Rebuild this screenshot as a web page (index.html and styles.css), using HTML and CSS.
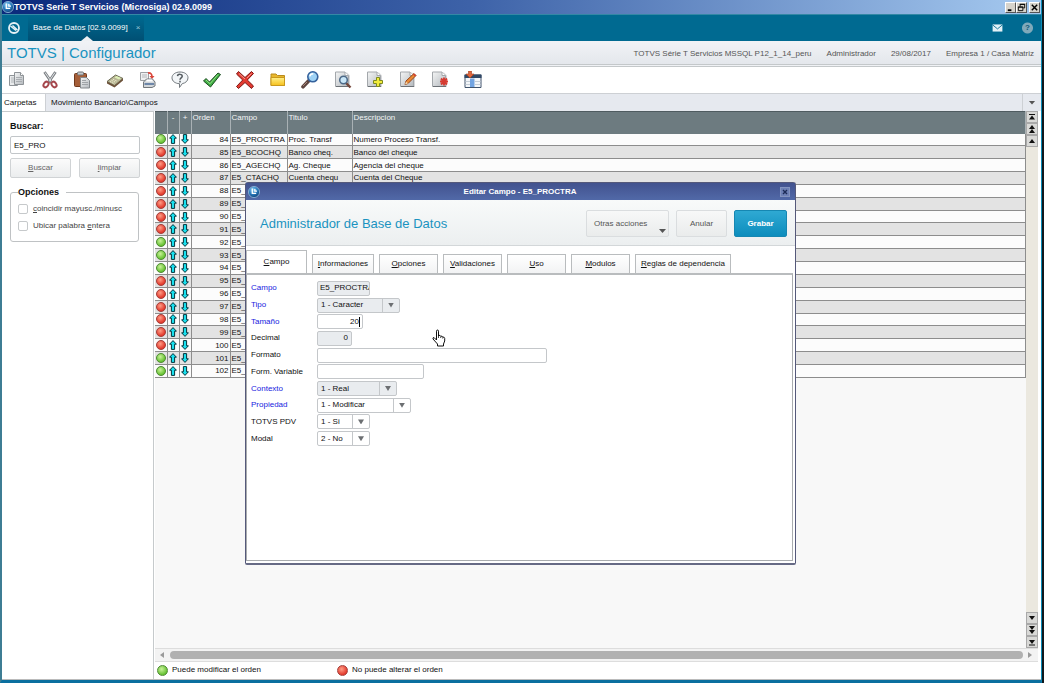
FILE: index.html
```html
<!DOCTYPE html>
<html lang="es">
<head>
    <meta charset="UTF-8">
    <meta name="viewport" content="width=device-width, initial-scale=1.0">
    <title>TOTVS Serie T Servicios (Microsiga) 02.9.0099</title>
    <link rel="stylesheet" href="styles.css">
</head>
<body>

<!-- Shared icons -->
<svg class="defs" aria-hidden="true">
    <defs>
        <radialGradient id="globe" cx="40%" cy="30%" r="75%">
            <stop offset="0" stop-color="#8fd0f5"/>
            <stop offset=".5" stop-color="#2b7fc0"/>
            <stop offset="1" stop-color="#0b3a70"/>
        </radialGradient>
        <linearGradient id="paper" x1="0" y1="0" x2="1" y2="1">
            <stop offset="0" stop-color="#f4f5f5"/>
            <stop offset="1" stop-color="#b4b9be"/>
        </linearGradient>
        <linearGradient id="yellow" x1="0" y1="0" x2="0" y2="1">
            <stop offset="0" stop-color="#fff08a"/>
            <stop offset="1" stop-color="#f6c01c"/>
        </linearGradient>
    </defs>
    <symbol id="logo" viewBox="0 0 14 14">
        <circle cx="7" cy="7" r="6.5" fill="url(#globe)" stroke="#8fb4d8"/>
        <path d="M5 3v5.5h4.500M8 3.500v2.500h2.500" fill="none" stroke="#fff" stroke-width="1.500"/>
    </symbol>
    <symbol id="page" viewBox="0 0 18 18">
        <path d="M2 1.500h11l3 3V16H2z" fill="#8b9095" opacity=".35"/>
        <path d="M1.500 1h9.500l3.500 3.500V15.500h-13z" fill="url(#paper)" stroke="#a3a7ab"/>
        <path d="M11 1v3.500h3.500" fill="#fff" stroke="#a3a7ab"/>
        <path d="M2 15.500h13" stroke="#6b7075"/>
    </symbol>
    <symbol id="up" viewBox="0 0 8 10">
        <path d="M4 .6L7.400 4.200H5.600V9.400H2.400V4.200H.6z" fill="#19e0ee" stroke="#04343c"/>
    </symbol>
    <symbol id="down" viewBox="0 0 8 10">
        <path d="M4 9.400L7.400 5.800H5.600V.6H2.400V5.800H.6z" fill="#19e0ee" stroke="#04343c"/>
    </symbol>
</svg>

<div class="app">

    <!-- Window title -->
    <header class="titlebar">
        <svg class="logo"><use href="#logo"/></svg>
        <span class="title">TOTVS Serie T Servicios (Microsiga) 02.9.0099</span>
        <button class="win-btn" aria-label="Minimizar"><svg viewBox="0 0 10 10"><path d="M2 8h4" stroke="#000" stroke-width="2"/></svg></button>
        <button class="win-btn" aria-label="Restaurar"><svg viewBox="0 0 10 10"><path d="M3.500 4V1.500h5v4H7M1.500 4.500h5v4h-5zM3 1.500h6M1 4.500h6" fill="none" stroke="#000"/></svg></button>
        <button class="win-btn win-close" aria-label="Cerrar"><svg viewBox="0 0 10 10"><path d="M2 2l6 6M8 2L2 8" stroke="#000" stroke-width="1.600"/></svg></button>
    </header>

    <!-- Program tabs -->
    <nav class="topbar">
        <a class="home" href="#" aria-label="Inicio">
            <svg viewBox="0 0 14 14"><circle cx="7" cy="7" r="5" fill="none" stroke="#e6f2f6" stroke-width="1.800"/><path d="M3.500 5L9 9.500M5.500 4.500L10.500 9" stroke="#e6f2f6" stroke-width="1.500"/></svg>
        </a>
        <div class="program-tab">
            <a href="#">Base de Datos [02.9.0099]</a>
            <button aria-label="Cerrar pestaña">×</button>
        </div>
        <a class="top-icon mail" href="#" aria-label="Mensajes">
            <svg viewBox="0 0 12 9"><path d="M.5.500h11v8H.5z" fill="#e3f1f6"/><path d="M.5 1L6 5.500 11.500 1" fill="none" stroke="#006a91"/></svg>
        </a>
        <a class="top-icon help" href="#" aria-label="Ayuda">?</a>
    </nav>

    <div class="brand">
        <h1>TOTVS | Configurador</h1>
        <ul class="session">
            <li>TOTVS Série T Servicios MSSQL P12_1_14_peru</li>
            <li>Administrador</li>
            <li>29/08/2017</li>
            <li>Empresa 1 / Casa Matriz</li>
        </ul>
    </div>

    <!-- Toolbar -->
    <div class="toolbar-row">
        <div class="toolbar">
            <button title="Copiar"><svg viewBox="0 0 18 18"><path d="M1.500 4.500h8v10h-8z" fill="#e9ebec" stroke="#8e9397"/><path d="M3 7h4M3 9h4M3 11h4" stroke="#b0b4b8"/><path d="M6.500 1.500h6l3 3v9h-9z" fill="url(#paper)" stroke="#8e9397"/><path d="M12.500 1.500v3h3" fill="#fff" stroke="#8e9397"/><path d="M8 6.500h6M8 8.500h6M8 10.500h6" stroke="#a9adb1"/></svg></button>
            <button title="Cortar"><svg viewBox="0 0 18 18"><path d="M3.500 1L11 12M14.500 1L7 12" stroke="#7b7f83" stroke-width="2.800"/><path d="M4 1.500L10.500 11M14 1.500L8 10.500" stroke="#e2e5e8"/><ellipse cx="5" cy="13.500" rx="2.200" ry="3" transform="rotate(35 5 13.500)" fill="#fff" stroke="#a5474d" stroke-width="2"/><ellipse cx="13" cy="13.500" rx="2.200" ry="3" transform="rotate(-35 13 13.500)" fill="#fff" stroke="#a5474d" stroke-width="2"/></svg></button>
            <button title="Pegar"><svg viewBox="0 0 18 18"><rect x="1.500" y="2.500" width="12" height="13" rx="1" fill="#a55e38" stroke="#70391d"/><rect x="4.500" y="1" width="6" height="3" rx="1" fill="#c5c9cc" stroke="#6f7376"/><path d="M7.500 6.500h6l3 3v7.500h-9z" fill="url(#paper)" stroke="#84898d"/><path d="M9 9.500h4M9 11.500h6M9 13.500h6" stroke="#a0a4a8"/></svg></button>
            <button title="Calculadora"><svg viewBox="0 0 18 18"><path d="M1 10.500L9.500 4l7.500 3.500-8.500 7z" fill="#b9b795" stroke="#6b6a52"/><path d="M1 10.500v2L8.500 16.500v-2zM8.500 16.500L17 9.500v-2l-8.500 7z" fill="#6c5139"/><path d="M8.500 6.500l2-1.500 4.500 2-2 1.600z" fill="#dff0b8"/><path d="M4 10.500l4 2M5.500 9.300l4 2M7 8.200l4 2" stroke="#f0edd0" stroke-dasharray="1.500 1"/></svg></button>
            <button title="Imprimir"><svg viewBox="0 0 18 18"><path d="M2.500 1.500h8v8h-8z" fill="#eef0f1" stroke="#9da1a5"/><path d="M4 4h5M4 6h5" stroke="#b4b7ba"/><path d="M10 2q4-.5 4 4" fill="none" stroke="#d9463b" stroke-width="1.700"/><path d="M11.500 5h5L14 8z" fill="#d9463b"/><path d="M5.500 11l3-3h6l2.500 3v4l-3 1.500H5.500z" fill="#d3d7da" stroke="#72777b"/><path d="M6.500 13h9.500" stroke="#4d6c98" stroke-width="1.500"/><path d="M9 8.500h5l1 2H8z" fill="#fff"/></svg></button>
            <button title="Ayuda"><svg viewBox="0 0 18 18"><path d="M9 1c4.700 0 8 2.500 8 5.800s-2.700 5.300-5.700 5.800L8.500 16.500v-3.800C4 12.500 1 10 1 6.800S4.300 1 9 1z" fill="#f3f6f8" stroke="#73797e"/><path d="M6.500 5.200C6.800 2.600 11.500 2.900 11.200 5.300 11 7 9 6.800 9 8.800M9 9.800v1.600" fill="none" stroke="#555b60" stroke-width="1.500"/></svg></button>
            <button title="Confirmar"><svg viewBox="0 0 18 18"><path d="M.5 10l2.500-2.500L6.500 11 15 2l2.500 1.500L7.500 16z" fill="#3fae45" stroke="#1c4a20"/><path d="M3 9l4 3.800L15 3.500" fill="none" stroke="#97dd85"/></svg></button>
            <button title="Cancelar"><svg viewBox="0 0 18 18"><path d="M.5 3l2-2.500L9 6.500 15.500.5l2 2L11.300 9l6.200 6-2 2.500L9 11.500l-6.500 6-2-2L6.700 9z" fill="#e23a31" stroke="#7e1512"/><path d="M3 2.500l6 5.500M15.500 2.500l-4.500 4.500" stroke="#f59b8f"/></svg></button>
            <button title="Carpeta"><svg viewBox="0 0 18 18"><path d="M2 4.500V3h5l1.500 1.500h7v10H2z" fill="#e8b72c" stroke="#b98a1c"/><path d="M2 6.500h13.500v8H2z" fill="url(#yellow)" stroke="#c9981c"/></svg></button>
            <button title="Buscar"><svg viewBox="0 0 18 18"><path d="M2 15.800L7.500 10" stroke="#5d4540" stroke-width="3.600" stroke-linecap="round"/><path d="M2 15L6 11" stroke="#a98678"/><circle cx="11.800" cy="5.800" r="5" fill="#9ed2f5" stroke="#35619c" stroke-width="1.600"/><path d="M8.800 5.300q.5-2.500 3.500-2.500" fill="none" stroke="#fff" stroke-width="1.500"/></svg></button>
            <button title="Visualizar"><svg viewBox="0 0 18 18"><use href="#page"/><path d="M12 12l4.500 4.500" stroke="#75483c" stroke-width="2.400"/><circle cx="9.500" cy="9" r="3.800" fill="#c8e6f8" stroke="#4d6a88" stroke-width="1.500"/></svg></button>
            <button title="Incluir"><svg viewBox="0 0 18 18"><use href="#page"/><path d="M10.500 6.500h3v3h3v3h-3v3h-3v-3h-3v-3h3z" fill="#f2ec3c" stroke="#7e8a1e"/></svg></button>
            <button title="Modificar"><svg viewBox="0 0 18 18"><use href="#page"/><path d="M6 13.500L7 10l8-7.500 2 2-8 8z" fill="#ea8a35" stroke="#96451a"/><path d="M14 3.500l2 2 1-1-2-2z" fill="#d63c34"/><path d="M6 13.500l1-3 2 2z" fill="#f1d7ad"/></svg></button>
            <button title="Borrar"><svg viewBox="0 0 18 18"><use href="#page"/><path d="M13 6.500v8M9 10.500h8M10 7.500l6 6M16 7.500l-6 6" stroke="#d63a31" stroke-width="1.900"/></svg></button>
            <button title="Tabla"><svg viewBox="0 0 18 18"><path d="M1 4h16v12.500H1z" fill="#f3f6f9" stroke="#40536c"/><path d="M.5 3.500h17v3.500H.5z" fill="#314966"/><path d="M6 7.500h4.500v8.500H6z" fill="#72a4e2"/><path d="M1.500 10.500h4.500M1.500 13.500h4.500M10.500 10.500h6M10.500 13.500h6" stroke="#c3ccd6"/><path d="M4.500 0h3v3h2.500L6 7 2 3h2.500z" fill="#e0663c" stroke="#a13e1e" stroke-width=".6"/></svg></button>
        </div>
    </div>

    <div class="folders">
        <a class="folder active" href="#">Carpetas</a>
        <a class="folder" href="#">Movimiento Bancario\Campos</a>
        <button class="folder-menu" aria-label="Más carpetas"><i class="tri"></i></button>
    </div>

    <div class="content">

        <!-- Search panel -->
        <aside class="search">
            <form>
                <label class="search-label" for="search">Buscar:</label>
                <input class="search-input" type="text" id="search" value="E5_PRO">
                <div class="search-buttons">
                    <button type="button"><u>B</u>uscar</button>
                    <button type="button"><u>l</u>impiar</button>
                </div>
                <fieldset>
                    <legend>Opciones</legend>
                    <label><input type="checkbox"><span><u>c</u>oincidir mayusc./minusc</span></label>
                    <label><input type="checkbox"><span>Ubicar palabra <u>e</u>ntera</span></label>
                </fieldset>
            </form>
        </aside>

        <!-- Fields grid -->
        <main class="browse">
            <div class="grid-area">
                <div class="grid-scroll">
                    <table class="fields">
                        <thead>
                            <tr>
                                <th class="c-icon"></th>
                                <th class="c-icon">-</th>
                                <th class="c-icon">+</th>
                                <th class="c-order">Orden</th>
                                <th class="c-field">Campo</th>
                                <th class="c-title">Titulo</th>
                                <th>Descripcion</th>
                            </tr>
                        </thead>
                        <tbody id="fields-body"></tbody>
                    </table>
                </div>
                <div class="vscroll">
                    <button aria-label="Primero"><svg viewBox="0 0 10 10"><path d="M2 2.500h6" stroke="#111"/><path d="M5 3.500l3 4H2z" fill="#111"/></svg></button>
                    <button aria-label="Página anterior"><svg viewBox="0 0 10 10"><path d="M5 1l3 4H2zM5 5l3 4H2z" fill="#111"/></svg></button>
                    <button aria-label="Anterior"><svg viewBox="0 0 10 10"><path d="M5 3l3 4H2z" fill="#111"/></svg></button>
                    <div class="track"></div>
                    <button aria-label="Siguiente"><svg viewBox="0 0 10 10"><path d="M5 7l3-4H2z" fill="#111"/></svg></button>
                    <button aria-label="Página siguiente"><svg viewBox="0 0 10 10"><path d="M5 5l3-4H2zM5 9l3-4H2z" fill="#111"/></svg></button>
                    <button aria-label="Último"><svg viewBox="0 0 10 10"><path d="M2 8h6" stroke="#111"/><path d="M5 7l3-4H2z" fill="#111"/></svg></button>
                </div>
            </div>
            <div class="hscroll">
                <button aria-label="Izquierda"><svg viewBox="0 0 6 8"><path d="M5 1v6L1 4z" fill="#9a9a9a"/></svg></button>
                <div class="thumb"></div>
                <button aria-label="Derecha"><svg viewBox="0 0 6 8"><path d="M1 1v6l4-3z" fill="#9a9a9a"/></svg></button>
            </div>
            <div class="legend">
                <span><i class="ball green"></i>Puede modificar el orden</span>
                <span><i class="ball red"></i>No puede alterar el orden</span>
            </div>
        </main>
    </div>
</div>

<!-- Edit field dialog -->
<section class="dialog" role="dialog" aria-labelledby="dialog-title">
    <div class="dialog-title">
        <svg class="logo"><use href="#logo"/></svg>
        <h2 id="dialog-title">Editar Campo - E5_PROCTRA</h2>
        <button class="dialog-close" aria-label="Cerrar"><svg viewBox="0 0 8 8"><path d="M2 2l4 4M6 2L2 6" stroke="#1c2b57" stroke-width="1.400"/></svg></button>
    </div>
    <div class="dialog-head">
        <h3>Administrador de Base de Datos</h3>
        <button class="btn actions">Otras acciones<i class="tri"></i></button>
        <button class="btn cancel">Anular</button>
        <button class="btn primary">Grabar</button>
    </div>
    <div class="dialog-tabs">
        <button class="active"><u>C</u>ampo</button>
        <button class="medium"><u>I</u>nformaciones</button>
        <button><u>O</u>pciones</button>
        <button><u>V</u>alidaciones</button>
        <button><u>U</u>so</button>
        <button><u>M</u>odulos</button>
        <button class="wide"><u>R</u>eglas de dependencia</button>
    </div>
    <div class="dialog-body">
        <form class="field-form">
            <label class="required" for="campo">Campo</label>
            <span class="box off clipped w-campo"><input type="text" id="campo" value="E5_PROCTRA" readonly></span>

            <label class="required" for="tipo">Tipo</label>
            <span class="box off w-tipo"><select id="tipo"><option>1 - Caracter</option></select><i class="arrow"></i></span>

            <label class="required" for="tamano">Tamaño</label>
            <span class="box number focus w-tamano"><input type="text" id="tamano" value="20"></span>

            <label for="decimal">Decimal</label>
            <span class="box off number w-decimal"><input type="text" id="decimal" value="0" readonly></span>

            <label for="formato">Formato</label>
            <span class="box w-formato"><input type="text" id="formato"></span>

            <label for="variable">Form. Variable</label>
            <span class="box w-variable"><input type="text" id="variable"></span>

            <label class="required" for="contexto">Contexto</label>
            <span class="box off w-contexto"><select id="contexto"><option>1 - Real</option></select><i class="arrow"></i></span>

            <label class="required" for="propiedad">Propiedad</label>
            <span class="box w-propiedad"><select id="propiedad"><option>1 - Modificar</option></select><i class="arrow"></i></span>

            <label for="pdv">TOTVS PDV</label>
            <span class="box w-campo"><select id="pdv"><option>1 - Si</option></select><i class="arrow"></i></span>

            <label for="modal">Modal</label>
            <span class="box w-campo"><select id="modal"><option>2 - No</option></select><i class="arrow"></i></span>
        </form>
    </div>
    <svg class="pointer" viewBox="0 0 14 18" aria-hidden="true"><path d="M4.500 11V2.200Q4.500 1 5.500 1t1 1.200V7l.2-.6q1.600-.4 2 .8 1.600-.4 2 .8 1.800-.2 2 1.400V12l-1.200 3v2H5.500v-2L1 10q-.4-1.500 1-1.500z" fill="#fff" stroke="#111"/><path d="M6.500 7v2M8.700 7.500V9M10.700 8.300V9.500" stroke="#111" stroke-width=".8"/></svg>
</section>

<script>
// Fields of table SE5: order, field, title, description, can be reordered
const fields = [
    [84, 'E5_PROCTRA', 'Proc. Transf', 'Numero Proceso Transf.', true],
    [85, 'E5_BCOCHQ', 'Banco cheq.', 'Banco del cheque', false],
    [86, 'E5_AGECHQ', 'Ag. Cheque', 'Agencia del cheque', false],
    [87, 'E5_CTACHQ', 'Cuenta chequ', 'Cuenta del Cheque', false]
];

// The remaining orders only carry the table prefix
const movable = [92, 93, 94, 101, 102];
for (let order = 88; order <= 102; order++) {
    fields.push([order, 'E5_', '', '', movable.includes(order)]);
}

document.getElementById('fields-body').innerHTML = fields.map(([order, name, title, text, free]) => `
    <tr>
        <td class="c-icon"><i class="ball ${free ? 'green' : 'red'}"></i></td>
        <td class="c-icon"><svg class="move"><use href="#up"/></svg></td>
        <td class="c-icon"><svg class="move"><use href="#down"/></svg></td>
        <td class="c-order">${order}</td>
        <td>${name}</td>
        <td>${title}</td>
        <td>${text}</td>
    </tr>`).join('');
</script>

</body>
</html>
```
FILE: styles.css
```css
* {
    box-sizing: border-box;
}
body {
    margin: 0;
    height: 100vh;
    padding-right: 2px;
    background-color: #10181c;
    font-family: "Liberation Sans", Arial, sans-serif;
    font-size: 8px;
    line-height: 10px;
    color: #111;
    position: relative;
    overflow: hidden;
}
button, input, select {
    font: inherit;
    color: inherit;
    margin: 0;
    padding: 0;
    border: none;
    background: none;
}
button {
    cursor: pointer;
}
a {
    color: inherit;
    text-decoration: none;
}
h1, h2, h3 {
    margin: 0;
    font-weight: normal;
}
svg {
    display: block;
}
.defs {
    position: absolute;
    width: 0;
    height: 0;
}
.tri {
    width: 7px;
    height: 4px;
    background-color: #555;
    clip-path: polygon(0 0, 100% 0, 50% 100%);
}

.app {
    height: 100%;
    display: flex;
    flex-direction: column;
    border-left: 2px solid #3e7d94;
    border-right: 1px solid #0b8cb8;
    border-bottom: 3px solid #0a6f9f;
    background-color: #fff;
}

/* Window title */
.titlebar {
    flex: none;
    height: 14px;
    display: flex;
    align-items: center;
    padding-right: 1px;
    background: linear-gradient(to right, #0a2a7c, #3d62a8 45%, #a6caf0);
    color: #fff;
}
.logo {
    width: 12px;
    height: 12px;
}
.titlebar .title {
    flex: 1;
    font-size: 9px;
    font-weight: bold;
}
.win-btn {
    width: 11px;
    height: 11px;
    background-color: #d6d3cb;
    border: 1px solid;
    border-color: #fff #555 #555 #fff;
}
.win-close {
    margin-left: 2px;
}

/* Program tabs */
.topbar {
    flex: none;
    height: 27px;
    display: flex;
    align-items: center;
    background-color: #006a91;
    border-top: 1px solid #3488a5;
    color: #fff;
}
.home {
    width: 26px;
    padding-left: 5px;
}
.home svg {
    width: 14px;
    height: 14px;
}
.program-tab {
    height: 100%;
    display: flex;
    align-items: center;
    gap: 8px;
    padding: 0 4px 0 5px;
    margin-right: auto;
    background: linear-gradient(to bottom, #006a91, #004f73);
    position: relative;
}
.program-tab::after {
    content: "";
    position: absolute;
    bottom: 0;
    left: 53px;
    width: 12px;
    height: 5px;
    background-color: #eef0f3;
    clip-path: polygon(50% 0, 100% 100%, 0 100%);
}
.program-tab button {
    color: #9cc6d6;
}
.top-icon {
    width: 29px;
    height: 100%;
    display: flex;
    align-items: center;
    justify-content: center;
}
.mail {
    margin-right: 2px;
}
.mail svg {
    width: 11px;
    height: 8px;
}
.help {
    width: 27px;
    font-weight: bold;
    color: #0b5877;
    background: radial-gradient(circle at center, #7fa9ba 5px, transparent 6px);
}

.brand {
    flex: none;
    height: 26px;
    display: flex;
    align-items: center;
    justify-content: space-between;
    padding: 0 7px 0 5px;
    background: linear-gradient(to bottom, #f1f3f6, #e4e7ec);
    border-bottom: 3px double #c4c8ca;
}
.brand h1 {
    font-size: 15px;
    line-height: 20px;
    color: #1a93c0;
}
.session {
    display: flex;
    gap: 15px;
    margin: 0;
    padding: 2px 0 0;
    list-style: none;
    color: #555;
}

/* Toolbar */
.toolbar-row {
    flex: none;
    height: 26px;
    padding: 4px 6px;
}
.toolbar {
    width: 474px;
    display: flex;
    justify-content: space-between;
}
.toolbar svg {
    width: 18px;
    height: 18px;
}

.folders {
    flex: none;
    height: 18px;
    display: flex;
    background-color: #e6e9ef;
    border-top: 1px solid #cdd0d4;
}
.folder {
    padding: 4px 5px;
}
.folder.active {
    width: 44px;
    padding-left: 2px;
    background-color: #fff;
    border-right: 1px solid #cdd0d4;
}
.folder-menu {
    width: 19px;
    margin-left: auto;
    display: flex;
    align-items: center;
    justify-content: center;
    border-left: 1px solid #cdd0d4;
}

.content {
    flex: 1;
    min-height: 0;
    display: flex;
    border-bottom: 1px solid #bbb;
}

/* Search panel */
.search {
    flex: none;
    width: 152px;
    padding: 8px 13px 0 8px;
    border-top: 1px solid #c6cacc;
    border-right: 1px solid #c6cacc;
}
.search-label {
    display: block;
    font-size: 9px;
    font-weight: bold;
    line-height: 12px;
}
.search-input {
    display: block;
    width: 100%;
    height: 18px;
    margin: 4px 0;
    padding: 0 3px;
    border: 1px solid #c2c6c9;
    border-radius: 2px;
}
.search-buttons {
    display: flex;
    gap: 8px;
}
.search-buttons button {
    flex: 1;
    height: 20px;
    color: #666;
    border: 1px solid #d0d3d5;
    border-radius: 2px;
    background: linear-gradient(to bottom, #fbfbfb, #ebedee);
}
.search fieldset {
    min-width: 0;
    margin: 9px 1px 0 0;
    padding: 3px 7px 7px;
    border: 1px solid #bfc2c4;
    border-radius: 3px;
    color: #444;
}
.search legend {
    padding: 0 7px 0 0;
    font-size: 9px;
    font-weight: bold;
    color: #111;
}
.search fieldset label {
    display: flex;
    align-items: center;
    gap: 5px;
    height: 17px;
    white-space: nowrap;
}
.search input[type="checkbox"] {
    appearance: none;
    width: 10px;
    height: 10px;
    border: 1px solid #c6c9cb;
    border-radius: 2px;
    background-color: #fff;
}

/* Fields grid */
.browse {
    flex: 1;
    min-width: 0;
    display: flex;
    flex-direction: column;
    padding: 0 3px 0 1px;
}
.grid-area {
    flex: 1;
    min-height: 0;
    display: flex;
}
.grid-scroll {
    flex: 1;
    overflow: hidden;
    background-color: #f8f8f8;
}
.fields {
    width: 100%;
    height: 267px;
    table-layout: fixed;
    border-collapse: collapse;
}
.fields th {
    height: 22px;
    padding: 1px 1px;
    vertical-align: top;
    text-align: left;
    font-weight: normal;
    color: #f2f4f5;
    background-color: #6d7b80;
    border-top: 1px solid #4f5b60;
    border-right: 1px solid #a9b1b4;
}
.fields td {
    padding: 0 1px;
    line-height: 11px;
    white-space: nowrap;
    border-right: 1px solid #8d8d8d;
    border-bottom: 1px solid #8d8d8d;
}
.fields tbody tr {
    background-color: #fcfcfc;
}
.fields tbody tr:nth-child(even) {
    background-color: #e3e3e3;
}
.fields .c-icon {
    width: 12px;
    padding-left: 0;
    padding-right: 0;
    text-align: center;
}
.c-order {
    width: 39px;
}
.fields td.c-order {
    text-align: right;
}
.c-field {
    width: 57px;
}
.c-title {
    width: 65px;
}
.ball {
    display: block;
    width: 10px;
    height: 10px;
    margin: 0 auto;
    border-radius: 50%;
}
.ball.green {
    border: 1px solid #4f8a35;
    background: radial-gradient(circle at 40% 35%, #c9f29a, #66c232 70%);
}
.ball.red {
    border: 1px solid #a3403c;
    background: radial-gradient(circle at 40% 35%, #ff9d86, #e3392c 70%);
}
.move {
    width: 8px;
    height: 10px;
    margin: 0 auto;
}

/* Scrollbars */
.vscroll {
    width: 12px;
    display: flex;
    flex-direction: column;
}
.vscroll button {
    height: 12px;
    border: 1px solid #a9a9a9;
    background-color: #d9d9d7;
}
.vscroll button svg {
    width: 10px;
    height: 10px;
}
.track {
    flex: 1;
    background-color: #ebe8df;
}
.hscroll {
    flex: none;
    height: 14px;
    display: flex;
    align-items: center;
    background-color: #f3f3f3;
    border-top: 1px solid #ddd;
    border-bottom: 1px solid #ddd;
}
.hscroll button {
    width: 15px;
    padding: 0 4px;
}
.hscroll svg {
    width: 6px;
    height: 8px;
}
.thumb {
    flex: 1;
    height: 8px;
    border-radius: 4px;
    background-color: #b1b1b1;
}
.legend {
    flex: none;
    display: flex;
    height: 17px;
    padding: 0 0 1px 2px;
}
.legend span {
    width: 180px;
    display: flex;
    align-items: center;
    gap: 4px;
}
.legend .ball {
    margin: 0;
    width: 11px;
    height: 11px;
}

/* Edit field dialog */
.dialog {
    position: absolute;
    top: 182px;
    left: calc(50% - 277px);
    width: 551px;
    height: 383px;
    display: flex;
    flex-direction: column;
    border: 1px solid #55597a;
    border-bottom: 2px solid #666a85;
    border-radius: 3px 3px 2px 2px;
    background-color: #fff;
}
.dialog-title {
    height: 17px;
    display: flex;
    align-items: center;
    padding: 0 5px 0 2px;
    background: linear-gradient(to bottom, #42528e, #5169a8);
    color: #fff;
}
.dialog-title h2 {
    flex: 1;
    font-size: 8px;
    font-weight: bold;
    text-align: center;
}
.dialog-close {
    width: 10px;
    height: 10px;
    border: 1px solid #8494c0;
    background-color: #6d80b5;
}
.dialog-head {
    height: 46px;
    display: flex;
    align-items: center;
    gap: 7px;
    padding: 2px 8px 0 14px;
    background: linear-gradient(to bottom, #f8fafa, #eceff0);
    border-bottom: 1px solid #d3d7d9;
}
.dialog-head h3 {
    flex: 1;
    font-size: 13px;
    line-height: 16px;
    color: #1a93c0;
}
.btn {
    height: 27px;
    border: 1px solid #dadddf;
    border-radius: 2px;
    background: linear-gradient(to bottom, #f7f8f8, #eaecec);
    color: #555;
}
.actions {
    width: 83px;
    display: flex;
    align-items: center;
    justify-content: space-between;
    padding: 0 2px 0 7px;
}
.actions .tri {
    align-self: flex-end;
    margin-bottom: 3px;
}
.cancel {
    width: 51px;
}
.primary {
    width: 53px;
    border: 1px solid #1687b2;
    background: linear-gradient(to bottom, #2fa9d3, #0d8dbd);
    color: #fff;
    font-weight: bold;
}
.dialog-tabs {
    height: 27px;
    display: flex;
    align-items: flex-end;
    gap: 5px;
}
.dialog-tabs button {
    width: 59px;
    height: 19px;
    border: 1px solid #b9bcbe;
    border-bottom: none;
    background: linear-gradient(to bottom, #fff, #f2f3f4);
}
.dialog-tabs .active {
    width: 61px;
    height: 23px;
    background: #fff;
}
.dialog-tabs .medium {
    width: 62px;
}
.dialog-tabs .wide {
    width: 96px;
}
.dialog-body {
    flex: 1;
    margin: 0 2px 2px 0;
    padding: 5px 4px;
    border: 1px solid #a9acae;
    border-top: 2px solid #b9bcbe;
}
.field-form {
    height: 167px;
    display: grid;
    grid-template-columns: 60px 1fr;
    grid-template-rows: repeat(10, 1fr);
    column-gap: 6px;
    align-items: center;
}
.required {
    color: #2023e0;
}
.box {
    height: 15px;
    display: flex;
    border: 1px solid #c4c7ca;
    border-radius: 2px;
    background-color: #fff;
}
.box.off {
    background-color: #e9ecef;
}
.box input, .box select {
    flex: 1;
    min-width: 0;
    appearance: none;
    padding: 0 3px;
    outline: none;
}
.box.number input {
    text-align: right;
}
.box.clipped input {
    padding: 0 0 0 2px;
}
.box.focus {
    padding-right: 2px;
    align-items: center;
}
.box.focus input {
    padding-right: 0;
}
/* Text caret after the value */
.box.focus::after {
    content: "";
    width: 1px;
    height: 10px;
    background-color: #000;
}
.arrow {
    width: 17px;
    display: flex;
    align-items: center;
    justify-content: center;
    border-left: 1px solid #c4c7ca;
}
.arrow::after {
    content: "";
    width: 6px;
    height: 5px;
    background-color: #6c6f72;
    clip-path: polygon(0 0, 100% 0, 50% 100%);
}
.w-campo {
    width: 53px;
}
.w-tipo {
    width: 83px;
}
.w-tamano {
    width: 46px;
}
.w-decimal {
    width: 35px;
}
.w-formato {
    width: 230px;
}
.w-variable {
    width: 107px;
}
.w-contexto {
    width: 80px;
}
.w-propiedad {
    width: 94px;
}
.pointer {
    position: absolute;
    top: 146px;
    left: 186px;
    width: 14px;
    height: 18px;
}
```
